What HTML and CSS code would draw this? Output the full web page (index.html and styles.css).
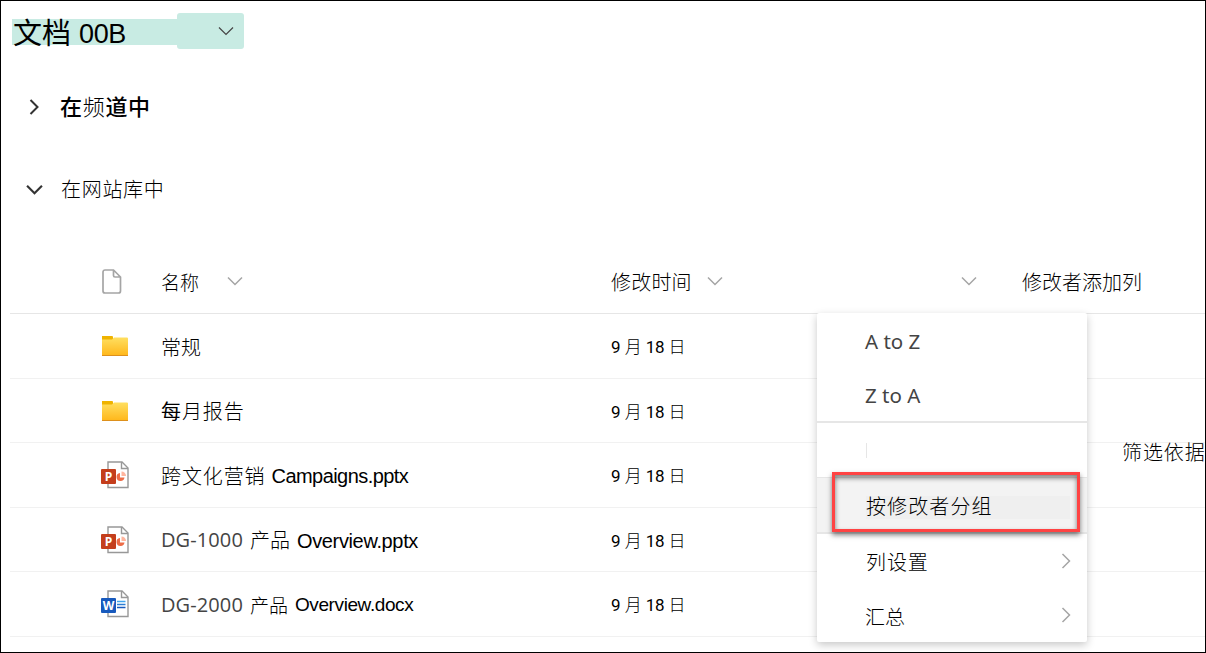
FILE: index.html
```html
<!DOCTYPE html>
<html lang="zh-CN">
<head>
    <meta charset="UTF-8">
    <meta name="viewport" content="width=device-width, initial-scale=1.0">
    <title>文档</title>
    <link rel="stylesheet" href="styles.css">
</head>
<body>
    <!-- 共用图标 -->
    <svg class="icon-defs" width="0" height="0">
        <defs>
            <linearGradient id="folderFill" x1="0" y1="0" x2="0" y2="1">
                <stop offset="0" stop-color="#ffdf60"/>
                <stop offset="1" stop-color="#ffb71b"/>
            </linearGradient>
            <symbol id="down" viewBox="0 0 16 10">
                <path d="M1 1.5l7 7 7-7" fill="none" stroke="currentColor"/>
            </symbol>
            <symbol id="right" viewBox="0 0 10 16">
                <path d="M1.5 1l7 7-7 7" fill="none" stroke="currentColor"/>
            </symbol>
            <symbol id="folder" viewBox="0 0 28 22">
                <path d="M1 1h10q1 0 1 1v5H1z" fill="#efb300"/>
                <path d="M1 4.500h10l2-2H26q1 0 1 1v17H1z" fill="url(#folderFill)"/>
                <path d="M1 20.500h26" stroke="#dd901c"/>
            </symbol>
            <symbol id="page" viewBox="0 0 28 28">
                <path d="M7 1h14l6 6v19.500H7z" fill="#fff" stroke="#989898" stroke-width="1.400"/>
                <path d="M20.500 1v6.500H27" fill="none" stroke="#989898" stroke-width="1.400"/>
            </symbol>
            <symbol id="ppt" viewBox="0 0 28 28">
                <use href="#page" width="28" height="28"/>
                <path d="M19 12v4.500h4.500a4 4 0 1 1-4.500-4.500z" fill="#ed6c47"/>
                <path d="M20.500 10.500a4.500 4.500 0 0 1 4.500 4.500h-4.500z" fill="#ffb59e"/>
                <rect y="8" width="15" height="15" rx="1" fill="#c43e1c"/>
                <text class="app-letter" x="7.500" y="20">P</text>
            </symbol>
            <symbol id="word" viewBox="0 0 28 28">
                <use href="#page" width="28" height="28"/>
                <path d="M16 11.500h8.500" stroke="#41a5ee" stroke-width="1.500"/>
                <path d="M16 14.500h8.500" stroke="#2b7cd3" stroke-width="1.500"/>
                <path d="M16 17.500h8.500" stroke="#185abd" stroke-width="1.500"/>
                <rect y="8" width="15" height="15" rx="1" fill="#185abd"/>
                <text class="app-letter" x="7.500" y="20">W</text>
            </symbol>
        </defs>
    </svg>

    <div class="page">
        <div class="title-bar">
            <h1 class="title">文档 <span class="title-code">00B</span></h1>
            <div class="title-drop"><svg class="chevron" width="16" height="10"><use href="#down"/></svg></div>
        </div>

        <div class="section section-channel">
            <svg class="section-arrow" width="10" height="16"><use href="#right"/></svg>
            <span class="section-name">在<span class="thin">频</span>道中</span>
        </div>
        <div class="section section-library">
            <svg class="section-arrow" width="17" height="11"><use href="#down"/></svg>
            <span class="section-name thin">在网站库中</span>
        </div>

        <div class="list">
            <div class="row row-head">
                <div class="cell-icon">
                    <svg class="doc-icon" width="20" height="25" viewBox="0 0 20 25"><path d="M3 1h8.500l7 7v14a2 2 0 0 1-2 2H3a2 2 0 0 1-2-2V3a2 2 0 0 1 2-2zM11.500 1v5.500a1.500 1.500 0 0 0 1.500 1.500h5.500" fill="none" stroke="#a5a5a5" stroke-width="1.700"/></svg>
                </div>
                <div class="cell-name small"><span>名称</span><svg class="chevron-gray name-chevron" width="16" height="10"><use href="#down"/></svg></div>
                <div class="cell-date"><span class="modified">修改时间</span><svg class="chevron-gray" width="16" height="10"><use href="#down"/></svg></div>
                <div class="cell-by"><svg class="chevron-gray" width="16" height="10"><use href="#down"/></svg></div>
                <div class="cell-add">修改者添加列</div>
            </div>
            <div class="row">
                <div class="cell-icon"><svg width="28" height="22"><use href="#folder"/></svg></div>
                <div class="cell-name">常规</div>
                <div class="cell-date date"><span><i>9</i> 月 <i>18</i> 日</span></div>
            </div>
            <div class="row row-short">
                <div class="cell-icon"><svg width="28" height="22"><use href="#folder"/></svg></div>
                <div class="cell-name wide"><b>每</b>月报告</div>
                <div class="cell-date date"><span><i>9</i> 月 <i>18</i> 日</span></div>
            </div>
            <div class="row">
                <div class="cell-icon"><svg width="28" height="28"><use href="#ppt"/></svg></div>
                <div class="cell-name"><span class="wide">跨文化营销</span><span class="latin campaigns">Campaigns.pptx</span></div>
                <div class="cell-date date"><span><i>9</i> 月 <i>18</i> 日</span></div>
            </div>
            <div class="row row-short">
                <div class="cell-icon"><svg width="28" height="28"><use href="#ppt"/></svg></div>
                <div class="cell-name"><span class="code">DG-1000</span><span class="product">产品</span><span class="latin">Overview.pptx</span></div>
                <div class="cell-date date"><span><i>9</i> 月 <i>18</i> 日</span></div>
            </div>
            <div class="row">
                <div class="cell-icon"><svg width="28" height="28"><use href="#word"/></svg></div>
                <div class="cell-name"><span class="code">DG-2000</span><span class="small">产品</span><span class="latin docx">Overview.docx</span></div>
                <div class="cell-date date"><span><i>9</i> 月 <i>18</i> 日</span></div>
            </div>
        </div>

        <div class="filter-label">筛选依据</div>

        <!-- 列标题下拉菜单 -->
        <div class="menu">
            <div class="menu-item sort">A to Z</div>
            <div class="menu-item sort sort-last">Z to A</div>
            <div class="menu-item menu-blank"></div>
            <div class="menu-item menu-active"><span class="group-text">按修改者分组</span></div>
            <div class="menu-item"><span class="wide">列设置</span><svg class="menu-arrow" width="10" height="16"><use href="#right"/></svg></div>
            <div class="menu-item menu-last"><span class="summary">汇总</span><svg class="menu-arrow" width="10" height="16"><use href="#right"/></svg></div>
            <div class="callout"></div>
        </div>
    </div>
</body>
</html>
```
FILE: styles.css
```css
* {
    box-sizing: border-box;
}
body {
    margin: 0;
    font-family: "Liberation Sans", "Noto Sans CJK SC", sans-serif;
    font-size: 20px;
    font-weight: 300;
    color: #000;
    background: #fff;
}
.icon-defs {
    position: absolute;
}
.page {
    position: relative;
    width: 1206px;
    height: 653px;
    border: 1px solid #000;
    overflow: hidden;
    white-space: nowrap;
}
.title-bar {
    display: flex;
    align-items: center;
    height: 36px;
    margin: 12px 0 0 11px;
}
.title {
    display: flex;
    align-items: center;
    gap: 8px;
    width: 165px;
    height: 26px;
    margin: 2px 0 0;
    padding: 3px 0 0 1px;
    background: #c8ebe3;
    font-size: 29px;
    font-weight: 400;
    line-height: 26px;
}
.title-code {
    font-size: 27px;
    letter-spacing: -0.4px;
}
.title-drop {
    display: flex;
    align-items: center;
    justify-content: flex-end;
    width: 67px;
    height: 36px;
    padding-right: 10px;
    border-radius: 3px;
    background: #c8ebe3;
    color: #444;
    stroke-width: 1.2;
}
.section {
    display: flex;
    align-items: center;
    height: 40px;
}
.section-channel {
    margin-top: 38px;
    padding-left: 28px;
    font-size: 22px;
    font-weight: 500;
}
.section-channel .section-name {
    margin: -4px 0 0 21px;
    letter-spacing: 0.7px;
}
.section-library {
    margin-top: 42px;
    padding-left: 25px;
}
.section-library .section-name {
    margin: -2px 0 0 18px;
    letter-spacing: 0.7px;
}
.section-arrow {
    color: #333;
    stroke-width: 2;
}
.thin {
    font-weight: 300;
}
.list {
    margin: 40px 0 0 9px;
}
.row {
    display: grid;
    grid-template-columns: 151px 450px 206px 205px 1fr;
    align-items: center;
    height: 65px;
    border-bottom: 1px solid #f1f1f1;
}
.row-short {
    height: 64px;
}
.row-head {
    border-bottom-color: #e6e6e6;
}
.cell-icon {
    display: flex;
    padding-left: 91px;
}
.doc-icon {
    margin-left: 1px;
}
.cell-name, .cell-date, .cell-by {
    display: flex;
    align-items: center;
}
.chevron-gray {
    color: #a5a5a5;
    stroke-width: 1.5;
}
.small {
    font-size: 19px;
}
.product {
    font-size: 20px;
}
.name-chevron {
    margin-left: 28px;
}
.modified {
    letter-spacing: 0.2px;
}
.cell-date .chevron-gray {
    margin-left: 15px;
}
.cell-by {
    padding-left: 144px;
}
.wide {
    letter-spacing: 0.9px;
}
.date {
    padding-bottom: 1px;
    font-family: Roboto, "Noto Sans CJK SC", sans-serif;
    font-size: 17px;
    letter-spacing: -0.5px;
    word-spacing: 1px;
}
.date i {
    font-style: normal;
    font-weight: 400;
}
.code {
    margin-right: 7px;
    font-family: "Open Sans", sans-serif;
    font-weight: 400;
    letter-spacing: 0.1px;
    color: #444;
}
.latin {
    margin: 3px 0 0 7px;
    font-size: 20px;
    letter-spacing: -0.35px;
}
.campaigns {
    margin-left: 6px;
    letter-spacing: -0.55px;
}
.docx {
    margin-top: 2px;
    font-size: 19px;
    letter-spacing: -0.4px;
}
.app-letter {
    font: bold 12px "Open Sans", sans-serif;
    fill: #fff;
    text-anchor: middle;
}
.filter-label {
    position: absolute;
    left: 1121px;
    top: 436px;
    letter-spacing: 0.9px;
}
.menu {
    position: absolute;
    left: 816px;
    top: 312px;
    width: 270px;
    height: 329px;
    padding-top: 2px;
    border-radius: 2px;
    background: #fff;
    box-shadow: 0 3px 8px rgba(0, 0, 0, 0.22);
}
.menu-item {
    display: flex;
    align-items: center;
    height: 54px;
    padding: 0 16px 0 49px;
}
.sort {
    padding: 0 0 2px 48px;
    font-family: "Noto Sans", sans-serif;
    font-size: 20.5px;
    font-weight: 400;
    color: #444;
}
.sort-last {
    padding-bottom: 0;
    border-bottom: 2px solid #e6e6e6;
}
.menu-blank::before {
    content: "";
    width: 1px;
    height: 15px;
    background: #e6e6e6;
}
.menu-active {
    height: 57px;
    border-top: 1px solid #e6e6e6;
    border-bottom: 2px solid #e6e6e6;
    background: #f3f3f3;
}
.group-text {
    width: 204px;
    height: 23px;
    margin-top: 4px;
    background: #efefef;
    line-height: 22px;
    letter-spacing: 1.1px;
}
.menu-last {
    height: 53px;
}
.summary {
    margin: 4px 0 0 -1px;
}
.menu-arrow {
    margin-left: auto;
    color: #a5a5a5;
    stroke-width: 1.5;
}
.callout {
    position: absolute;
    left: 15px;
    top: 159px;
    width: 248px;
    height: 60px;
    border: 3px solid #ff4343;
    box-shadow: 0 3px 5px rgba(0, 0, 0, 0.5), inset 0 3px 5px rgba(0, 0, 0, 0.5);
}
```
